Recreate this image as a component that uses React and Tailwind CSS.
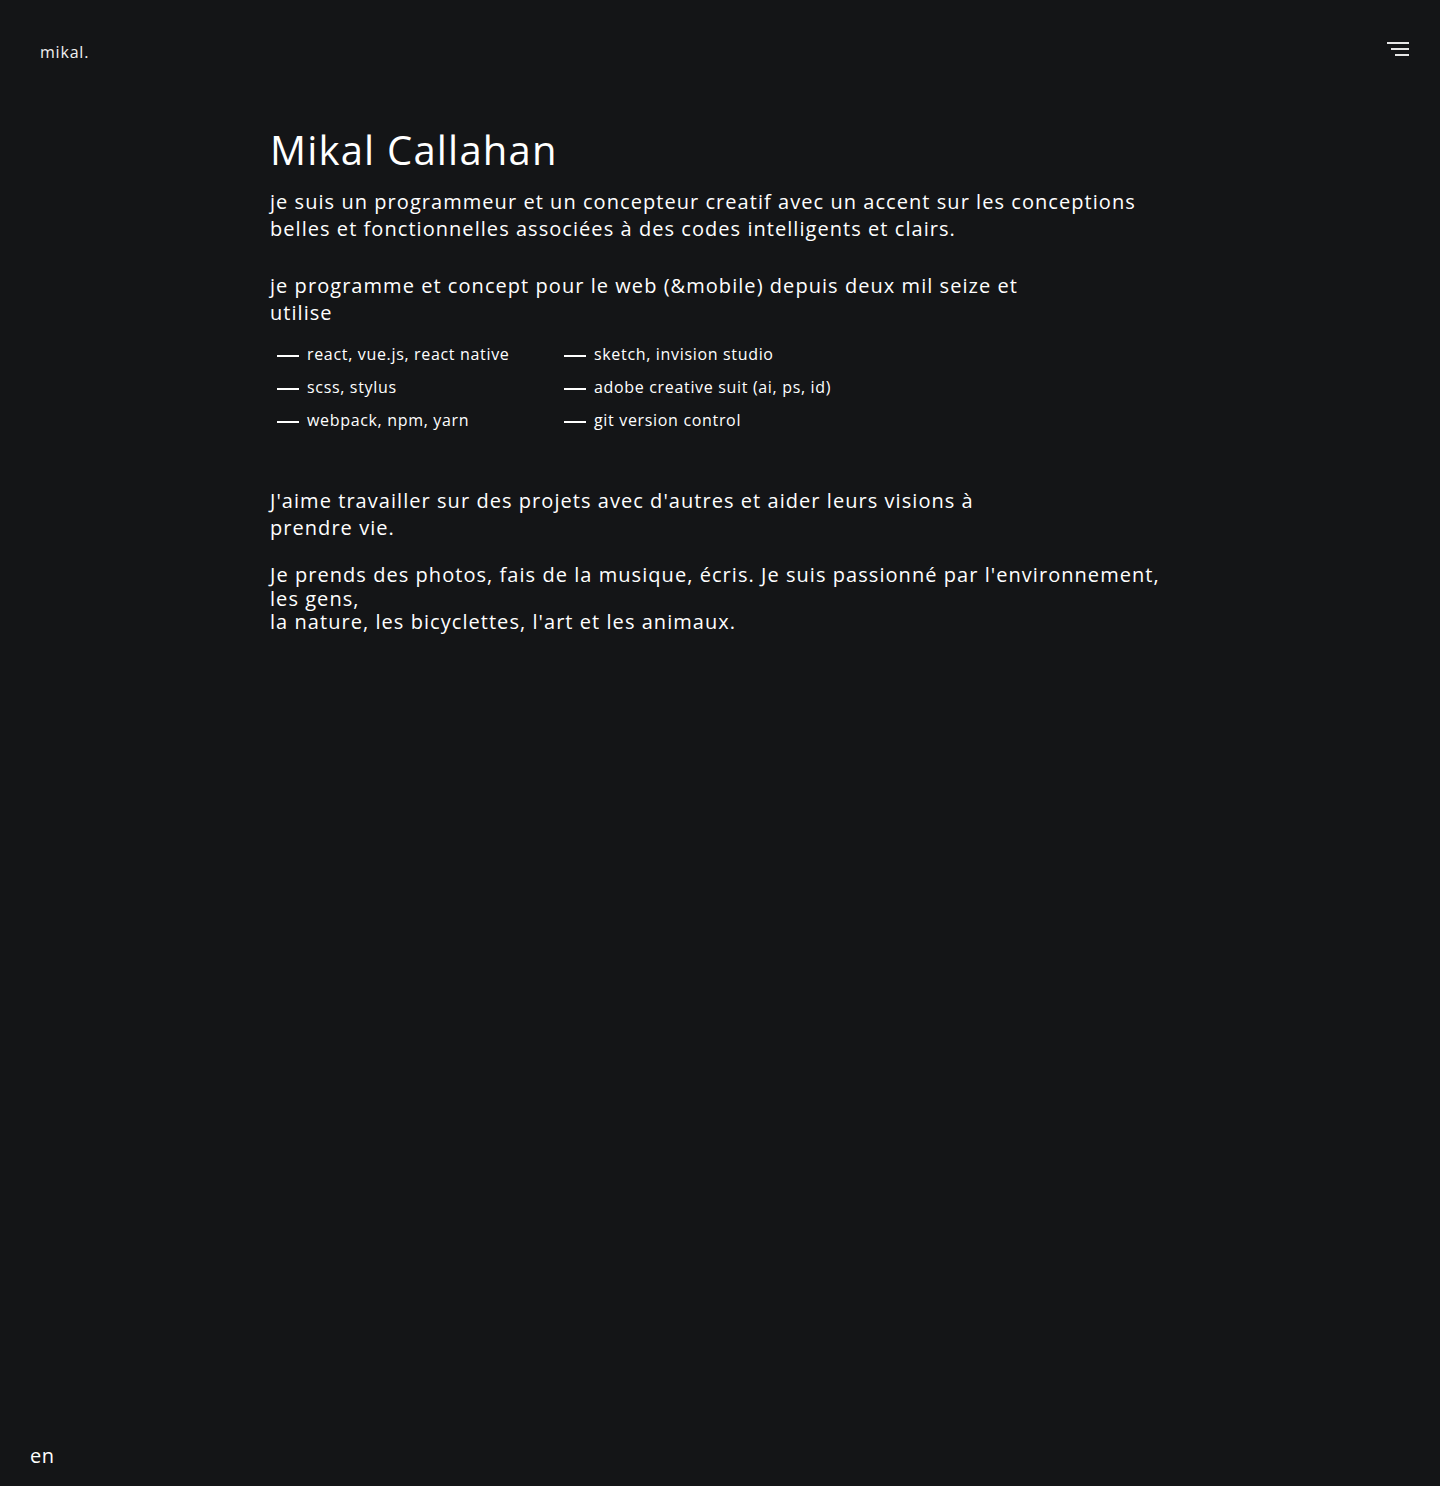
import React from 'react';

const skills = [
  ['react, vue.js, react native', 'sketch, invision studio'],
  ['scss, stylus', 'adobe creative suit (ai, ps, id)'],
  ['webpack, npm, yarn', 'git version control'],
];

const SkillItem = ({ label }) => (
  <li className="flex items-center h-[33px]">
    <span className="block w-[22px] h-[2px] bg-white ml-[7px] mr-[8px] mt-[4px]" />
    <span>{label}</span>
  </li>
);

export default function App() {
  return (
    <div className="min-h-[1486px] flex flex-col bg-[#141517] text-white font-['Open_Sans',sans-serif]">
      {/* header */}
      <header className="flex items-start justify-between pl-10 pr-[31px] pt-[40px]">
        <a className="text-[16px] leading-6 tracking-[0.8px] text-[#f0f0f0]">mikal.</a>
        <button className="flex flex-col items-end gap-[4px] mt-[2px]">
          <span className="block w-[22px] h-[2px] bg-[#e6e6e6]" />
          <span className="block w-[18px] h-[2px] bg-[#e6e6e6]" />
          <span className="block w-[14px] h-[2px] bg-[#e6e6e6]" />
        </button>
      </header>

      {/* content */}
      <main className="flex-1 pl-[270px] pt-[62px]">
        <h1 className="text-[40px] leading-[48px] tracking-[1.2px]">Mikal Callahan</h1>

        <p className="mt-[14px] text-[20px] leading-[27px] tracking-[1.05px] whitespace-nowrap">
          je suis un programmeur et un concepteur creatif avec un accent sur les conceptions
          <br />
          belles et fonctionnelles associées à des codes intelligents et clairs.
        </p>

        <p className="mt-[30px] text-[20px] leading-[27px] tracking-[1.05px] whitespace-nowrap">
          je programme et concept pour le web (&amp;mobile) depuis deux mil seize et
          <br />
          utilise
        </p>

        <div className="mt-[11px] grid grid-cols-[287px_auto] text-[16px] tracking-[0.67px]">
          <ul>
            {skills.map(([a]) => (
              <SkillItem key={a} label={a} />
            ))}
          </ul>
          <ul>
            {skills.map(([, b]) => (
              <SkillItem key={b} label={b} />
            ))}
          </ul>
        </div>

        <p className="mt-[51px] text-[20px] leading-[27px] tracking-[1.05px] whitespace-nowrap">
          J'aime travailler sur des projets avec d'autres et aider leurs visions à
          <br />
          prendre vie.
        </p>

        <p className="mt-[22px] text-[20px] leading-[23.5px] tracking-[1.05px] whitespace-nowrap">
          Je prends des photos, fais de la musique, écris. Je suis passionné par l'environnement,
          <br />
          les gens,
          <br />
          la nature, les bicyclettes, l'art et les animaux.
        </p>
      </main>

      {/* language switch */}
      <footer className="pl-[30px] pb-[17px]">
        <span className="text-[20px] leading-6 tracking-[0.5px]">en</span>
      </footer>
    </div>
  );
}
